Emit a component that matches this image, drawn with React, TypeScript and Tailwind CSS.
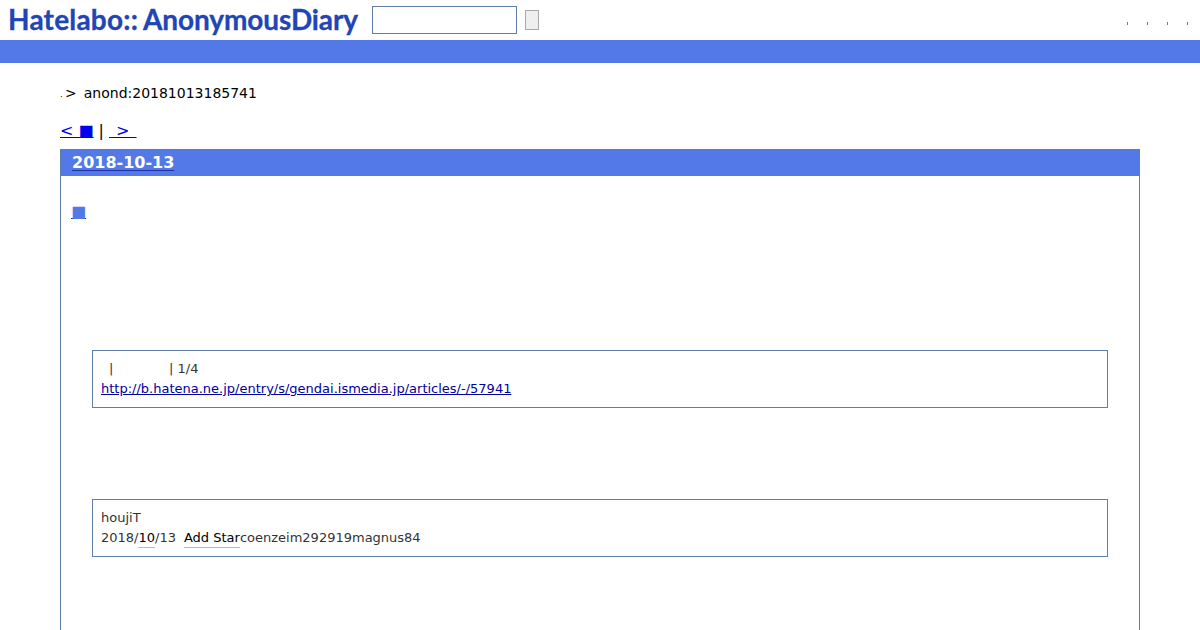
export default function App() {
  return (
    <div className="h-[630px] w-[1200px] overflow-hidden bg-white font-['DejaVu_Sans',sans-serif] text-black">
      <header className="flex h-10 items-start pl-2">
        <div className="mt-[2px] flex w-[364px] font-['Lato',sans-serif] text-[28px] leading-[34px] font-bold tracking-[0.2px] whitespace-nowrap text-[#2245b5] [-webkit-text-stroke:0.3px_#2245b5]">
          <span>Hatelabo::</span>
          <span className="ml-[5px] tracking-[-0.1px]">AnonymousDiary</span>
        </div>
        <input aria-label="search" className="mt-1.5 h-7 w-[145px] border border-[#5f7fa8] bg-white" />
        <button aria-label="submit" className="mt-2.5 ml-2 h-5 w-3.5 border border-[#a9a9a9] bg-[#efefef]" />
        <div className="mt-[22px] ml-auto flex gap-[19px] pr-3">
          <span className="h-[3px] w-px bg-[#777]" />
          <span className="h-[3px] w-px bg-[#777]" />
          <span className="h-[3px] w-px bg-[#777]" />
          <span className="h-[3px] w-px bg-[#777]" />
        </div>
      </header>
      <div className="h-[23px] bg-[#5279e7]" />
      <main className="px-[60px]">
        <div className="mt-[21px] flex h-[18px] items-center text-sm leading-[18px]">
          <span className="w-[5px] self-end text-[8px] leading-[14px]">.</span>
          <span>&gt;</span>
          <span className="ml-[7px]">anond:20181013185741</span>
        </div>
        <div className="mt-[19px] flex h-[20px] items-center text-base leading-5">
          <a href="#" className="text-[#0000ee] underline">&lt; ■</a>
          <span className="mx-[5px]">|</span>
          <a href="#" className="whitespace-pre text-[#0000ee] underline [word-spacing:2px]"> &gt; </a>
        </div>
        <section className="mt-2 h-[520px] border border-[#5f7fa8]">
          <h2 className="flex h-[26px] items-center bg-[#5279e7] pl-[11px] text-base font-bold text-white">
            <a href="#" className="underline decoration-[#1a2fa8] underline-offset-[2px]">2018-10-13</a>
          </h2>
          <div className="mt-6 flex h-6 items-center pl-2.5 text-base leading-6">
            <a href="#" className="text-[#5279e7] underline decoration-[#333]">■</a>
          </div>
          <div className="mx-[31px] mt-[126px] flex h-[58px] flex-col justify-center border border-[#5f7fa8] px-2 text-[13px] leading-5 text-[#333]">
            <p className="flex pl-2">
              <span className="w-[60px]">|</span>
              <span className="whitespace-pre">| 1/4</span>
            </p>
            <a href="#" className="text-[#0000a0] underline">http://b.hatena.ne.jp/entry/s/gendai.ismedia.jp/articles/-/57941</a>
          </div>
          <div className="mx-[31px] mt-[91px] flex h-[58px] flex-col justify-center border border-[#5f7fa8] px-2 text-[13px] leading-5 text-[#333]">
            <p>houjiT</p>
            <p className="flex whitespace-pre">
              <span>2018/</span>
              <span className="border-b border-[#bbb] leading-[19px] text-black">10</span>
              <span>/13</span>
              <span className="ml-2 border-b border-[#bbb] leading-[19px] text-black">Add Star</span>
              <span>coenzeim292919magnus84</span>
            </p>
          </div>
        </section>
      </main>
    </div>
  );
}
